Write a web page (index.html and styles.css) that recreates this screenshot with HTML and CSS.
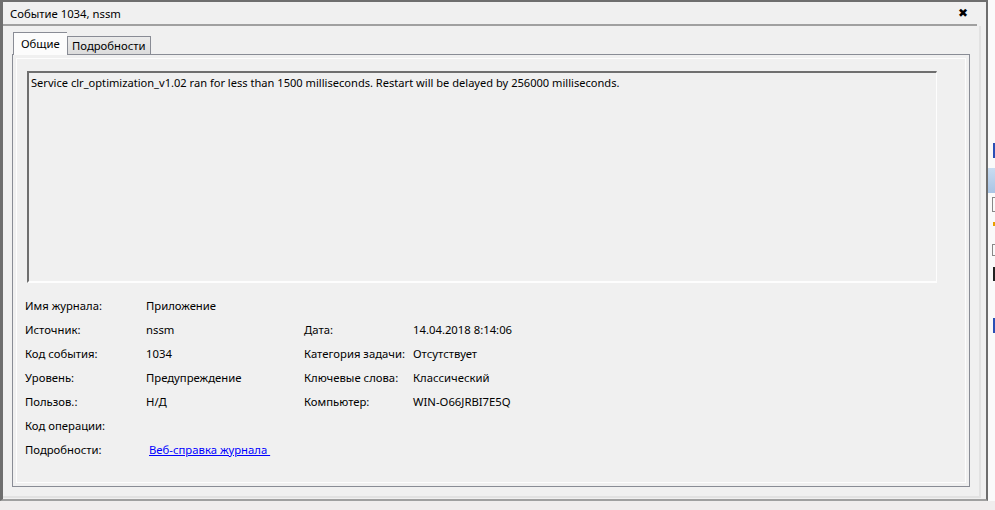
FILE: index.html
```html
<!DOCTYPE html>
<html lang="ru">
<head>
  <meta charset="UTF-8">
  <title>Событие 1034, nssm</title>
  <link rel="stylesheet" href="styles.css">
</head>
<body>
  <div class="screen">
    <div class="main-row">
      <div class="window">
        <div class="titlebar">
          <span class="title">Событие 1034, nssm</span>
          <span class="close">✖</span>
        </div>
        <div class="content">
          <div class="tabs">
            <div class="tab tab-active">Общие</div>
            <div class="tab">Подробности</div>
          </div>
          <div class="panel">
            <div class="message">Service clr_optimization_v1.02 ran for less than 1500 milliseconds. Restart will be delayed by 256000 milliseconds.</div>
            <div class="props">
              <div class="label">Имя журнала:</div>
              <div class="value">Приложение</div>
              <div></div>
              <div></div>

              <div class="label">Источник:</div>
              <div class="value">nssm</div>
              <div class="label">Дата:</div>
              <div class="value">14.04.2018 8:14:06</div>

              <div class="label">Код события:</div>
              <div class="value">1034</div>
              <div class="label">Категория задачи:</div>
              <div class="value">Отсутствует</div>

              <div class="label">Уровень:</div>
              <div class="value">Предупреждение</div>
              <div class="label">Ключевые слова:</div>
              <div class="value">Классический</div>

              <div class="label">Пользов.:</div>
              <div class="value">Н/Д</div>
              <div class="label">Компьютер:</div>
              <div class="value">WIN-O66JRBI7E5Q</div>

              <div class="label">Код операции:</div>
              <div class="value"></div>
              <div></div>
              <div></div>

              <div class="label">Подробности:</div>
              <div class="value"><a href="#" class="help-link">Веб-справка журнала&nbsp;</a></div>
              <div></div>
              <div></div>
            </div>
          </div>
        </div>
      </div>
      <div class="side">
        <div class="side-mark"></div>
        <div class="side-select"></div>
        <div class="side-box"></div>
        <div class="side-star"></div>
        <div class="side-box box-2"></div>
        <div class="side-info"></div>
        <div class="side-mark mark-2"></div>
      </div>
    </div>
    <div class="bottom-strip"></div>
  </div>
</body>
</html>
```

FILE: styles.css
```css
:root {
  --bg: #f0f0f0;
  --frame: #6e6e6e;
  --line: #a0a0a0;
  --tab-border: #898c95;
  --text: #000;
  --link: #0000ff;
}

* {
  margin: 0;
  padding: 0;
  box-sizing: border-box;
}

body {
  width: 995px;
  height: 510px;
  overflow: hidden;
  background-color: var(--bg);
  color: var(--text);
  font-family: "Noto Sans", "DejaVu Sans", sans-serif;
  font-size: 11px;
}

.screen {
  display: flex;
  flex-direction: column;
  height: 510px;
}

.main-row {
  display: flex;
  height: 501px;
}

/* окно события */
.window {
  flex: none;
  width: 988px;
  height: 501px;
  display: flex;
  flex-direction: column;
  background-color: var(--bg);
  border-top: 2px solid var(--frame);
  border-left: 3px solid var(--frame);
  border-right: 2px solid var(--frame);
  border-bottom: 2px solid var(--line);
}

.titlebar {
  flex: none;
  height: 24px;
  display: flex;
  align-items: center;
  justify-content: space-between;
  padding: 0 9px 0 7px;
  margin-right: 9px;
  border-bottom: 2px solid var(--line);
  font-size: 11.3px;
}

.close {
  font-size: 12px;
  font-weight: bold;
  font-family: "DejaVu Sans", sans-serif;
}

.content {
  flex-grow: 1;
  padding: 6px 0 9px 9px;
  margin: 0 5px 1px 0;
  border-bottom: 2px solid #e2e2e2;
  border-right: 2px solid #e2e2e2;
  display: flex;
  flex-direction: column;
}

.tabs {
  display: flex;
  align-items: flex-end;
  padding-left: 1px;
  height: 22px;
  position: relative;
  z-index: 1;
}

.tab {
  height: 18px;
  padding: 0 4px;
  border: 1px solid var(--tab-border);
  border-bottom: none;
  background: linear-gradient(#ebebeb, #dcdcdc);
  display: flex;
  align-items: center;
  font-size: 11.3px;
}

.tab-active {
  height: 23px;
  margin-bottom: -1px;
  padding: 0 7px 2px 7px;
  width: 54px;
  background: #fcfcfc;
  border-right: none;
}

.panel {
  width: 958px;
  flex-grow: 1;
  border: 1px solid var(--tab-border);
  box-shadow: inset 0 0 0 3px var(--bg), inset 0 0 0 4px #fdfdfd;
  padding: 16px 0 0 14px;
}

.message {
  width: 910px;
  height: 212px;
  border-top: 2px solid #6f6f6f;
  border-left: 2px solid #6f6f6f;
  border-right: 1px solid #fdfdfd;
  border-bottom: 2px solid #fdfdfd;
  padding: 2px 2px;
  font-size: 11.1px;
}

.props {
  display: grid;
  grid-template-columns: 121px 158px 109px 1fr;
  grid-auto-rows: 24px;
  margin: 10px 0 0 -2px;
  font-size: 11.3px;
}

.props > div {
  display: flex;
  align-items: center;
}

.help-link {
  color: var(--link);
  margin-left: 3px;
}

/* край соседнего окна */
.side {
  flex-grow: 1;
  background-color: #fafafa;
  display: flex;
  flex-direction: column;
  padding-top: 143px;
}

.side-mark {
  width: 2px;
  height: 15px;
  margin-left: 5px;
  background-color: #2a4fb5;
}

.side-select {
  height: 25px;
  margin-top: 10px;
  background: linear-gradient(#c9dcf1, #a9c4e4);
}

.side-box {
  width: 5px;
  height: 15px;
  margin: 4px 0 0 4px;
  border: 1px solid #888;
  border-right: none;
}

.box-2 {
  height: 12px;
  margin-top: 18px;
}

.side-star {
  width: 3px;
  height: 4px;
  margin: 10px 0 0 5px;
  background-color: #e8a000;
}

.side-info {
  width: 2px;
  height: 14px;
  margin: 11px 0 0 5px;
  background-color: #222;
}

.mark-2 {
  margin-top: 37px;
}

.bottom-strip {
  flex-grow: 1;
  background-color: #f0eded;
}
```
